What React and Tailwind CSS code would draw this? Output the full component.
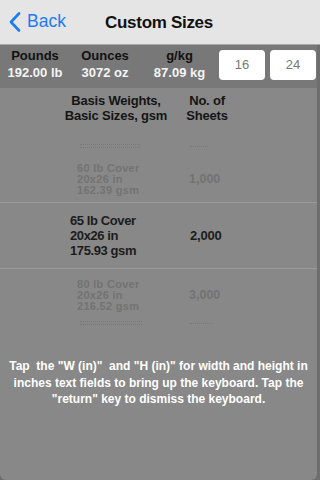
import React from "react";

const font = { fontFamily: '"Liberation Sans", Arial, sans-serif' };

function Chevron() {
  return (
    <svg width="12" height="20" viewBox="0 0 12 20" className="block">
      <path d="M10 1.5 L2 10 L10 18.5" fill="none" stroke="#1b7cf2" strokeWidth="2.6" strokeLinecap="round" strokeLinejoin="round" />
    </svg>
  );
}

function Stat({ label, value, w }) {
  return (
    <div className={`${w} flex flex-col items-center`}>
      <div className="text-[13px] leading-[17px] font-bold text-[#111]">{label}</div>
      <div className="text-[13px] leading-[17px] font-bold text-[#f4f4f4]">{value}</div>
    </div>
  );
}

function TinyRow({ h, pt, w1, w2 }) {
  return (
    <div className={`flex ${h} ${pt}`}>
      <div className="w-[80px]" />
      <div className="w-[110px] flex flex-col gap-[1px] opacity-60">
        <div className={`h-[2px] ${w1} border-t border-dotted border-[#6e6e6e]`} />
        <div className={`h-[2px] ${w1} border-t border-dotted border-[#6e6e6e]`} />
      </div>
      <div className={`${w2} h-[2px] mt-[2px] border-t border-dotted border-[#6e6e6e] opacity-60`} />
    </div>
  );
}

export default function App() {
  return (
    <div className="w-[320px] h-[480px] bg-[#6e6e6e] flex flex-col overflow-hidden" style={font}>
      <div className="h-[45px] shrink-0 bg-[#e5e5e5] border-b border-[#a9a9a9] grid grid-cols-[1fr_auto_1fr] items-center">
        <div className="flex items-center gap-[6px] pl-[9px]">
          <Chevron />
          <span className="text-[17.5px] text-[#1b7cf2] leading-none">Back</span>
        </div>
        <div className="text-[17px] font-semibold tracking-[-0.3px] text-[#111] leading-none pr-[2px]">Custom Sizes</div>
        <div />
      </div>
      <div className="flex-1 mr-[3px] rounded-b-[6px] overflow-hidden flex flex-col bg-[#888888]">
        <div className="h-[43px] shrink-0 bg-[#787878] flex items-start">
          <div className="flex pt-[2px]">
            <Stat label="Pounds" value="192.00 lb" w="w-[70px]" />
            <Stat label="Ounces" value="3072 oz" w="w-[70px]" />
            <Stat label="g/kg" value="87.09 kg" w="w-[79px]" />
          </div>
          <div className="flex gap-[5px] mt-[5px]">
            <div className="w-[46px] h-[30px] bg-white rounded-[4px] flex items-center justify-center text-[13px] text-[#777]">16</div>
            <div className="w-[46px] h-[30px] bg-white rounded-[4px] flex items-center justify-center text-[13px] text-[#777]">24</div>
          </div>
        </div>
        <div className="flex pt-[5px] text-[13px] font-bold tracking-[-0.2px] text-[#151515] leading-[15px]">
          <div className="w-[61px]" />
          <div className="w-[110px] text-center">Basis Weights,<br />Basic Sizes, gsm</div>
          <div className="w-[72px] text-center">No. of<br />Sheets</div>
        </div>
        <div className="flex flex-col mt-[5px]">
          <TinyRow h="h-[31px]" pt="pt-[16px]" w1="w-[60px]" w2="w-[18px]" />
          <div className="flex h-[43px] items-start pt-[4px]">
            <div className="w-[77px]" />
            <div className="w-[112px] flex flex-col text-[11px] font-bold tracking-[0.3px] text-[#737373] leading-[11px]">
              <div>60 lb Cover</div>
              <div>20x26 in</div>
              <div>162.39 gsm</div>
            </div>
            <div className="h-[33px] flex items-center text-[12.5px] font-bold text-[#737373]">1,000</div>
          </div>
          <div className="h-px bg-[#9a9a9a]" />
          <div className="flex h-[65px] items-center">
            <div className="w-[70px]" />
            <div className="w-[120px] flex flex-col text-[13px] font-bold tracking-[-0.4px] text-[#1c1c1c] leading-[15px]">
              <div>65 lb Cover</div>
              <div>20x26 in</div>
              <div>175.93 gsm</div>
            </div>
            <div className="text-[13px] font-bold tracking-[-0.2px] text-[#1c1c1c]">2,000</div>
          </div>
          <div className="h-px bg-[#9a9a9a]" />
          <div className="flex h-[44px] items-start pt-[10px]">
            <div className="w-[77px]" />
            <div className="w-[112px] flex flex-col text-[11px] font-bold tracking-[0.3px] text-[#737373] leading-[11px]">
              <div>80 lb Cover</div>
              <div>20x26 in</div>
              <div>216.52 gsm</div>
            </div>
            <div className="h-[33px] flex items-center text-[12.5px] font-bold text-[#737373]">3,000</div>
          </div>
          <TinyRow h="h-[20px]" pt="pt-[8px]" w1="w-[62px]" w2="w-[22px]" />
        </div>
        <div className="mt-[25px] text-center text-[12px] font-bold text-white leading-[16.5px] whitespace-pre">
          {'Tap  the "W (in)"  and "H (in)" for width and height in'}
          <br />
          {'inches text fields to bring up the keyboard. Tap the'}
          <br />
          {'"return" key to dismiss the keyboard.'}
        </div>
      </div>
    </div>
  );
}
